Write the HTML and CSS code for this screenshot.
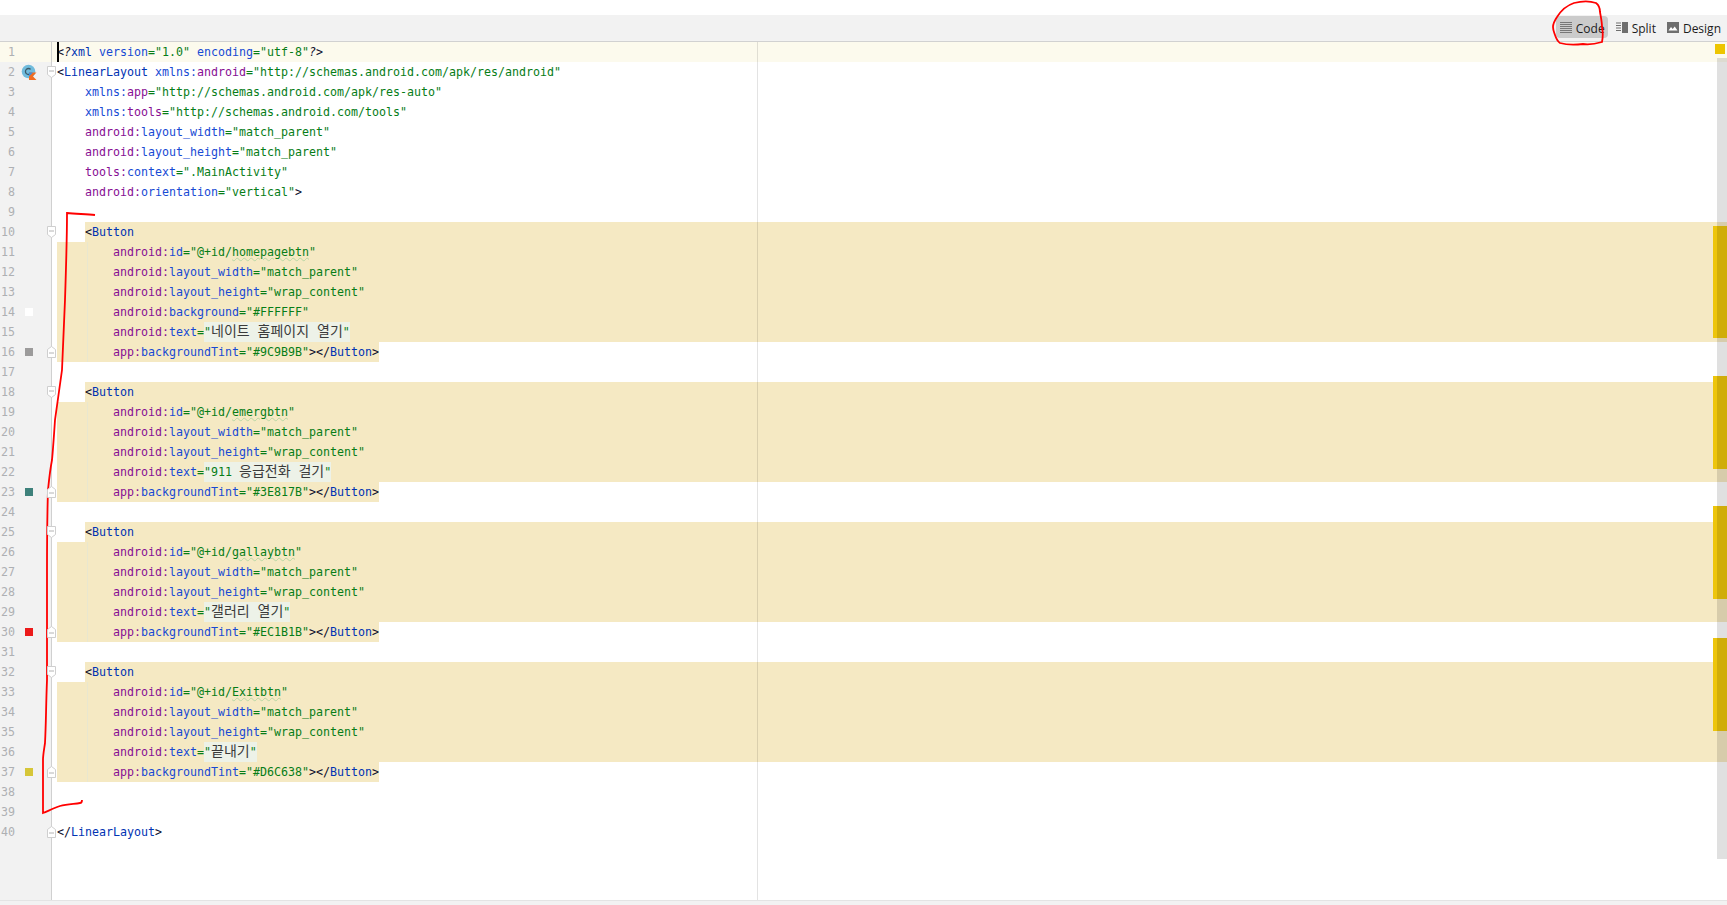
FILE: index.html
```html
<!DOCTYPE html>
<html lang="ko">
<head>
<meta charset="utf-8">
<title>activity_main.xml</title>
<link rel="stylesheet" href="styles.css">
</head>
<body>
<svg width="0" height="0" class="defs">
  <symbol id="fold-open" viewBox="0 0 9 12"><path d="M.5.5H8.5V8.5L4.5 11.5L.5 8.5Z" fill="#fff" stroke="#cfcfcf"/><path d="M2 5H7" stroke="#b4b4b4"/></symbol>
  <symbol id="fold-close" viewBox="0 0 9 12"><path d="M.5 11.5H8.5V3.5L4.5 .5L.5 3.5Z" fill="#fff" stroke="#cfcfcf"/><path d="M2 7H7" stroke="#b4b4b4"/></symbol>
</svg>
<div class="topgap"></div>
<header class="toolbar">
  <div class="tab active">
    <svg class="ico" viewBox="0 0 12 11"><path d="M0 .5H12M0 2.5H12M0 4.5H12M0 6.5H12M0 8.5H12M0 10.5H12" stroke="#777"/></svg>
    <span>Code</span>
  </div>
  <div class="tab">
    <svg class="ico" viewBox="0 0 12 11"><path d="M0 1H5M0 3.5H5M0 6H5M0 8.5H5" stroke="#6e6e6e" stroke-width="1.2"/><rect x="6" y="0" width="6" height="11" fill="#6e6e6e"/></svg>
    <span>Split</span>
  </div>
  <div class="tab">
    <svg class="ico" viewBox="0 0 12 11"><rect width="12" height="11" fill="#6e6e6e"/><path d="M1.5 8.5L4 5L5.7 7L7.7 4.5L10.5 8.5Z" fill="#fff"/></svg>
    <span>Design</span>
  </div>
</header>
<main class="editor">
  <div class="row cur"><div class="gut"><span class="num">1</span><span class="mark"></span></div><div class="code"><i class="caret"></i><span>&lt;<em>?</em><b class="t">xml</b> <b class="a">version</b><b class="v">="1.0"</b> <b class="a">encoding</b><b class="v">="utf-8"</b><em>?</em>&gt;</span></div></div>
  <div class="row"><div class="gut"><span class="num">2</span><span class="mark"><svg class="cls" viewBox="0 0 16 16"><circle cx="7.5" cy="7.5" r="6.8" fill="#70bbdc"/><path d="M9.6 5.4A3 3 0 1 0 9.6 9.6" fill="none" stroke="#3d5a68" stroke-width="1.3"/><path d="M8 16V8.5H15.5L11.8 12.2L15.5 16Z" fill="#f26d21"/><path d="M8 8.5H12L8 12.5Z" fill="#3d8ee0"/></svg></span><svg class="fold"><use href="#fold-open"/></svg></div><div class="code"><span>&lt;<b class="t">LinearLayout</b> <b class="a">xmlns:</b><b class="n">android</b><b class="v">="http://schemas.android.com/apk/res/android"</b></span></div></div>
  <div class="row"><div class="gut"><span class="num">3</span><span class="mark"></span></div><div class="code"><span class="ind"></span><span><b class="a">xmlns:</b><b class="n">app</b><b class="v">="http://schemas.android.com/apk/res-auto"</b></span></div></div>
  <div class="row"><div class="gut"><span class="num">4</span><span class="mark"></span></div><div class="code"><span class="ind"></span><span><b class="a">xmlns:</b><b class="n">tools</b><b class="v">="http://schemas.android.com/tools"</b></span></div></div>
  <div class="row"><div class="gut"><span class="num">5</span><span class="mark"></span></div><div class="code"><span class="ind"></span><span><b class="n">android:</b><b class="a">layout_width</b><b class="v">="match_parent"</b></span></div></div>
  <div class="row"><div class="gut"><span class="num">6</span><span class="mark"></span></div><div class="code"><span class="ind"></span><span><b class="n">android:</b><b class="a">layout_height</b><b class="v">="match_parent"</b></span></div></div>
  <div class="row"><div class="gut"><span class="num">7</span><span class="mark"></span></div><div class="code"><span class="ind"></span><span><b class="n">tools:</b><b class="a">context</b><b class="v">=".MainActivity"</b></span></div></div>
  <div class="row"><div class="gut"><span class="num">8</span><span class="mark"></span></div><div class="code"><span class="ind"></span><span><b class="n">android:</b><b class="a">orientation</b><b class="v">="vertical"</b>&gt;</span></div></div>
  <div class="row"><div class="gut"><span class="num">9</span><span class="mark"></span></div><div class="code"></div></div>

  <div class="row"><div class="gut"><span class="num">10</span><span class="mark"></span><svg class="fold"><use href="#fold-open"/></svg></div><div class="code"><span class="ind"></span><div class="hl fill">&lt;<b class="t">Button</b></div></div></div>
  <div class="row"><div class="gut"><span class="num">11</span><span class="mark"></span></div><div class="code"><div class="hl fill"><span class="ind2"></span><span><b class="n">android:</b><b class="a">id</b><b class="v">="@+id/<u class="sq">homepagebtn</u>"</b></span></div></div></div>
  <div class="row"><div class="gut"><span class="num">12</span><span class="mark"></span></div><div class="code"><div class="hl fill"><span class="ind2"></span><span><b class="n">android:</b><b class="a">layout_width</b><b class="v">="match_parent"</b></span></div></div></div>
  <div class="row"><div class="gut"><span class="num">13</span><span class="mark"></span></div><div class="code"><div class="hl fill"><span class="ind2"></span><span><b class="n">android:</b><b class="a">layout_height</b><b class="v">="wrap_content"</b></span></div></div></div>
  <div class="row"><div class="gut"><span class="num">14</span><span class="mark"><i class="sw c-fff"></i></span></div><div class="code"><div class="hl fill"><span class="ind2"></span><span><b class="n">android:</b><b class="a">background</b><b class="v">="#FFFFFF"</b></span></div></div></div>
  <div class="row"><div class="gut"><span class="num">15</span><span class="mark"></span></div><div class="code"><div class="hl fill"><span class="ind2"></span><span><b class="n">android:</b><b class="a">text</b><b class="v">=</b><span class="str">"<span class="ko">네이트 홈페이지 열기</span>"</span></span></div></div></div>
  <div class="row"><div class="gut"><span class="num">16</span><span class="mark"><i class="sw c-9c9"></i></span><svg class="fold end"><use href="#fold-close"/></svg></div><div class="code"><div class="hl"><span class="ind2"></span><span><b class="n">app:</b><b class="a">backgroundTint</b><b class="v">="#9C9B9B"</b>&gt;&lt;/<b class="t">Button</b>&gt;</span></div></div></div>
  <div class="row"><div class="gut"><span class="num">17</span><span class="mark"></span></div><div class="code"></div></div>

  <div class="row"><div class="gut"><span class="num">18</span><span class="mark"></span><svg class="fold"><use href="#fold-open"/></svg></div><div class="code"><span class="ind"></span><div class="hl fill">&lt;<b class="t">Button</b></div></div></div>
  <div class="row"><div class="gut"><span class="num">19</span><span class="mark"></span></div><div class="code"><div class="hl fill"><span class="ind2"></span><span><b class="n">android:</b><b class="a">id</b><b class="v">="@+id/<u class="sq">emergbtn</u>"</b></span></div></div></div>
  <div class="row"><div class="gut"><span class="num">20</span><span class="mark"></span></div><div class="code"><div class="hl fill"><span class="ind2"></span><span><b class="n">android:</b><b class="a">layout_width</b><b class="v">="match_parent"</b></span></div></div></div>
  <div class="row"><div class="gut"><span class="num">21</span><span class="mark"></span></div><div class="code"><div class="hl fill"><span class="ind2"></span><span><b class="n">android:</b><b class="a">layout_height</b><b class="v">="wrap_content"</b></span></div></div></div>
  <div class="row"><div class="gut"><span class="num">22</span><span class="mark"></span></div><div class="code"><div class="hl fill"><span class="ind2"></span><span><b class="n">android:</b><b class="a">text</b><b class="v">=</b><span class="str">"911 <span class="ko">응급전화 걸기</span>"</span></span></div></div></div>
  <div class="row"><div class="gut"><span class="num">23</span><span class="mark"><i class="sw c-3e8"></i></span><svg class="fold end"><use href="#fold-close"/></svg></div><div class="code"><div class="hl"><span class="ind2"></span><span><b class="n">app:</b><b class="a">backgroundTint</b><b class="v">="#3E817B"</b>&gt;&lt;/<b class="t">Button</b>&gt;</span></div></div></div>
  <div class="row"><div class="gut"><span class="num">24</span><span class="mark"></span></div><div class="code"></div></div>

  <div class="row"><div class="gut"><span class="num">25</span><span class="mark"></span><svg class="fold"><use href="#fold-open"/></svg></div><div class="code"><span class="ind"></span><div class="hl fill">&lt;<b class="t">Button</b></div></div></div>
  <div class="row"><div class="gut"><span class="num">26</span><span class="mark"></span></div><div class="code"><div class="hl fill"><span class="ind2"></span><span><b class="n">android:</b><b class="a">id</b><b class="v">="@+id/<u class="sq">gallaybtn</u>"</b></span></div></div></div>
  <div class="row"><div class="gut"><span class="num">27</span><span class="mark"></span></div><div class="code"><div class="hl fill"><span class="ind2"></span><span><b class="n">android:</b><b class="a">layout_width</b><b class="v">="match_parent"</b></span></div></div></div>
  <div class="row"><div class="gut"><span class="num">28</span><span class="mark"></span></div><div class="code"><div class="hl fill"><span class="ind2"></span><span><b class="n">android:</b><b class="a">layout_height</b><b class="v">="wrap_content"</b></span></div></div></div>
  <div class="row"><div class="gut"><span class="num">29</span><span class="mark"></span></div><div class="code"><div class="hl fill"><span class="ind2"></span><span><b class="n">android:</b><b class="a">text</b><b class="v">=</b><span class="str">"<span class="ko">갤러리 열기</span>"</span></span></div></div></div>
  <div class="row"><div class="gut"><span class="num">30</span><span class="mark"><i class="sw c-ec1"></i></span><svg class="fold end"><use href="#fold-close"/></svg></div><div class="code"><div class="hl"><span class="ind2"></span><span><b class="n">app:</b><b class="a">backgroundTint</b><b class="v">="#EC1B1B"</b>&gt;&lt;/<b class="t">Button</b>&gt;</span></div></div></div>
  <div class="row"><div class="gut"><span class="num">31</span><span class="mark"></span></div><div class="code"></div></div>

  <div class="row"><div class="gut"><span class="num">32</span><span class="mark"></span><svg class="fold"><use href="#fold-open"/></svg></div><div class="code"><span class="ind"></span><div class="hl fill">&lt;<b class="t">Button</b></div></div></div>
  <div class="row"><div class="gut"><span class="num">33</span><span class="mark"></span></div><div class="code"><div class="hl fill"><span class="ind2"></span><span><b class="n">android:</b><b class="a">id</b><b class="v">="@+id/<u class="sq">Exitbtn</u>"</b></span></div></div></div>
  <div class="row"><div class="gut"><span class="num">34</span><span class="mark"></span></div><div class="code"><div class="hl fill"><span class="ind2"></span><span><b class="n">android:</b><b class="a">layout_width</b><b class="v">="match_parent"</b></span></div></div></div>
  <div class="row"><div class="gut"><span class="num">35</span><span class="mark"></span></div><div class="code"><div class="hl fill"><span class="ind2"></span><span><b class="n">android:</b><b class="a">layout_height</b><b class="v">="wrap_content"</b></span></div></div></div>
  <div class="row"><div class="gut"><span class="num">36</span><span class="mark"></span></div><div class="code"><div class="hl fill"><span class="ind2"></span><span><b class="n">android:</b><b class="a">text</b><b class="v">=</b><span class="str">"<span class="ko">끝내기</span>"</span></span></div></div></div>
  <div class="row"><div class="gut"><span class="num">37</span><span class="mark"><i class="sw c-d6c"></i></span><svg class="fold end"><use href="#fold-close"/></svg></div><div class="code"><div class="hl"><span class="ind2"></span><span><b class="n">app:</b><b class="a">backgroundTint</b><b class="v">="#D6C638"</b>&gt;&lt;/<b class="t">Button</b>&gt;</span></div></div></div>
  <div class="row"><div class="gut"><span class="num">38</span><span class="mark"></span></div><div class="code"></div></div>
  <div class="row"><div class="gut"><span class="num">39</span><span class="mark"></span></div><div class="code"></div></div>
  <div class="row"><div class="gut"><span class="num">40</span><span class="mark"></span><svg class="fold end"><use href="#fold-close"/></svg></div><div class="code"><span>&lt;/<b class="t">LinearLayout</b>&gt;</span></div></div>
  <div class="rest"><div class="gut"></div></div>

  <div class="margin-line"></div>
  <div class="stripe s1"></div>
  <div class="stripe s2"></div>
  <div class="stripe s3"></div>
  <div class="stripe s4"></div>
  <div class="thumb"></div>
  <div class="status"></div>
</main>
<footer class="bottom"></footer>
<svg class="ink" viewBox="0 0 1727 905">
  <path d="M95 215C86 214 76 214 67 213C67 240 66 270 65 300C64 325 63 345 62 370C60 385 57 405 55 420C54 435 53 450 52 460C50 470 49 480 48 490C47 520 47 545 47 573C47 610 47 650 47 680C46 705 46 725 45 743C44 750 43 755 43 760C43 780 43 795 43 813C48 811 54 808 60 806C67 804 74 804 80 803C82 803 82 801 82 800"/>
  <path d="M1557 17C1562 9 1568 5 1574 3C1582 1 1590 1 1596 3C1600 6 1600 9 1600 12C1601 18 1602 22 1602 27C1603 32 1603 37 1602 42C1595 44 1590 45 1583 44C1575 45 1567 45 1560 43C1557 41 1556 38 1555 35C1554 32 1553 30 1553 27C1553 23 1555 20 1557 17"/>
</svg>
</body>
</html>
```
FILE: styles.css
```css
* { box-sizing: border-box; }
html, body { height: 100%; }
body {
  margin: 0;
  height: 905px;
  overflow: hidden;
  display: flex;
  flex-direction: column;
  background: #fff;
  position: relative;
  font-family: "DejaVu Sans Mono", "Noto Sans CJK KR", monospace;
  font-size: 11.63px;
  color: #0b0b2a;
}
.defs { position: absolute; }
.topgap { height: 15px; flex: none; }
.toolbar {
  height: 27px;
  flex: none;
  display: flex;
  justify-content: flex-end;
  align-items: flex-start;
  background: #f2f2f2;
  border-bottom: 1px solid #d1d1d1;
  padding: 1px 3px 0 0;
  font-family: "Open Sans", "Noto Sans", sans-serif;
  font-size: 12px;
  color: #1c1c1c;
}
.tab {
  display: flex;
  align-items: flex-start;
  gap: 4px;
  height: 22px;
  padding: 0 3px 0 4px;
  margin-left: 4px;
  border-radius: 4px;
}
.tab span { padding-top: 4px; line-height: 17px; }
.tab.active { background: #cbcbcb; }
.ico { width: 12px; height: 11px; flex: none; margin-top: 6px; }
.editor {
  flex: 1;
  min-height: 0;
  position: relative;
  display: flex;
  flex-direction: column;
  overflow: hidden;
}
.row {
  height: 20px;
  flex: none;
  display: flex;
  line-height: 20px;
  white-space: pre;
}
.rest { flex: 1; display: flex; }
.gut {
  width: 52px;
  flex: none;
  display: flex;
  align-items: center;
  background: #f2f2f2;
  border-right: 1px solid #d0d0d0;
}
.cur .gut { background: #fcfaed; }
.cur { background: #fcfaed; }
.num {
  width: 15px;
  flex: none;
  text-align: right;
  color: #aeb0b3;
}
.mark {
  width: 16px;
  height: 16px;
  flex: none;
  margin-left: 6px;
  display: flex;
  align-items: center;
  justify-content: center;
}
.cls { width: 16px; height: 16px; }
.sw { display: block; width: 8px; height: 8px; }
.c-fff { background: #fff; }
.c-9c9 { background: #9c9b9b; }
.c-3e8 { background: #3e817b; }
.c-ec1 { background: #ec1b1b; }
.c-d6c { background: #d6c638; }
.fold {
  width: 9px;
  height: 12px;
  flex: none;
  margin-left: 10px;
  position: relative;
  z-index: 1;
}
.code {
  flex: 1;
  min-width: 0;
  display: flex;
  padding-left: 5px;
}
.caret {
  display: block;
  width: 2px;
  height: 20px;
  margin-right: -2px;
  background: #000;
  position: relative;
  z-index: 1;
}
.ind { width: 28px; flex: none; }
.ind2 {
  display: inline-block;
  width: 56px;
  height: 20px;
  flex: none;
  background: linear-gradient(#e9e7cf, #e9e7cf) 30px 0 / 1px 100% no-repeat;
}
.hl { background: #f5e9c3; display: flex; }
.fill { flex: 1; }
b { font-weight: 400; }
em { font-style: italic; }
.t { color: #0033b3; }
.a { color: #174ad4; }
.n { color: #871094; }
.v { color: #067d17; }
.str { background: #edf2e8; color: #067d17; display: inline-block; }
.ko {
  font-size: 14px;
  color: #3a3a3a;
  word-spacing: 4px;
  font-family: "Noto Sans CJK KR", sans-serif;
  line-height: 1;
}
.sq {
  text-decoration: underline wavy #b9d6a4 1px;
  text-underline-offset: 1px;
}
.margin-line {
  position: absolute;
  left: 757px;
  top: 0;
  bottom: 0;
  width: 1px;
  background: rgba(0, 0, 0, .11);
}
.stripe {
  position: absolute;
  right: 0;
  width: 14px;
  background: #edc50c;
}
.s1 { top: 184px; height: 112px; }
.s2 { top: 334px; height: 93px; }
.s3 { top: 464px; height: 93px; }
.s4 { top: 596px; height: 93px; }
.thumb {
  position: absolute;
  right: 0;
  top: 16px;
  width: 10px;
  height: 801px;
  background: rgba(0, 0, 0, .12);
}
.status {
  position: absolute;
  left: 1715px;
  top: 2px;
  width: 10px;
  height: 10px;
  background: #edc500;
}
.bottom {
  height: 5px;
  flex: none;
  background: #f2f2f2;
  border-top: 1px solid #e4e4e4;
}
.ink {
  position: absolute;
  left: 0;
  top: 0;
  width: 1727px;
  height: 905px;
  pointer-events: none;
  fill: none;
  stroke: #f00;
  stroke-width: 1.8;
}
```
